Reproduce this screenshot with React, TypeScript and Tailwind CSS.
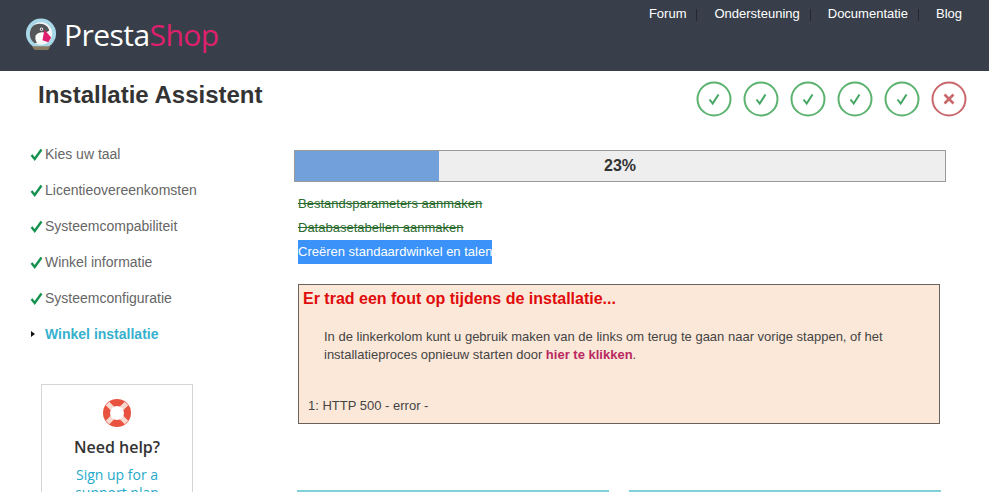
import React from "react";

const steps = ["Kies uw taal", "Licentieovereenkomsten", "Systeemcompabiliteit", "Winkel informatie", "Systeemconfiguratie"];

function Circle({ bad }: { bad?: boolean }) {
  const color = bad ? "#c9686c" : "#5cb26f";
  return (
    <svg width="36" height="36" viewBox="0 0 36 36" fill="none">
      <circle cx="18" cy="18" r="16.5" stroke={color} strokeWidth="2" />
      {bad ? (
        <path d="M13.5 13.5l9 9M22.5 13.5l-9 9" stroke={color} strokeWidth="2.6" />
      ) : (
        <path d="M13.5 18.5l3.2 4 5.8-9" stroke="#43a662" strokeWidth="2" />
      )}
    </svg>
  );
}

function Logo() {
  return (
    <svg width="33" height="33" viewBox="0 0 34 34">
      <circle cx="16.5" cy="16" r="15.5" fill="#a8d8e8" />
      <circle cx="16.5" cy="16" r="11.5" fill="#f4f6f6" />
      <path d="M5 17c0-7 4-11 10-11s9 3 10 7l-5 3-3 8-7 2c-3-2-5-5-5-9z" fill="#55565a" />
      <path d="M11 18c2-3 6-4 9-3l-2 9-5 2c-2-2-3-5-2-8z" fill="#fbfbfb" />
      <path d="M20 12l7 8-3 5-6-2z" fill="#df1f6d" />
      <circle cx="17" cy="11.5" r="1.6" fill="#fff" />
      <circle cx="17" cy="11.5" r="0.8" fill="#222" />
      <path d="M7 29h19l-2 4H10z" fill="#8b7a62" />
    </svg>
  );
}

function Lifebuoy() {
  return (
    <svg width="30" height="30" viewBox="0 0 30 30">
      <circle cx="15" cy="15" r="14" fill="#e8523f" />
      <path d="M5.5 5.5l5 5M24.5 5.5l-5 5M5.5 24.5l5-5M24.5 24.5l-5-5" stroke="#f8d9cf" strokeWidth="5" />
      <circle cx="15" cy="15" r="7" fill="#fff" />
    </svg>
  );
}

export default function App() {
  return (
    <div className="h-[492px] w-[989px] overflow-hidden bg-white font-['Liberation_Sans',sans-serif] text-[#333]">
      <header className="flex h-[71px] justify-between bg-[#393f4a]">
        <div className="flex items-start pl-[25px] pt-[18px]">
          <Logo />
          <span className="ml-[6px] font-['Open_Sans',sans-serif] text-[30px] font-medium leading-[33px] tracking-[-0.55px] text-white">
            Presta<span className="text-[#df1f6d]">Shop</span>
          </span>
        </div>
        <nav className="flex items-start pr-[27px] pt-[6px] text-[13px] leading-[16px] text-white">
          <a>Forum</a>
          <span className="ml-[10px] mr-[17px] mt-[3px] h-[12px] w-px bg-[#23272e]" />
          <a>Ondersteuning</a>
          <span className="ml-[10px] mr-[17px] mt-[3px] h-[12px] w-px bg-[#23272e]" />
          <a>Documentatie</a>
          <span className="ml-[10px] mr-[17px] mt-[3px] h-[12px] w-px bg-[#23272e]" />
          <a>Blog</a>
        </nav>
      </header>

      <div className="flex items-start justify-between pl-[38px] pr-[22px]">
        <h1 className="pt-[10px] text-[24px] font-bold leading-[28px] text-[#333]">Installatie Assistent</h1>
        <div className="flex gap-[11px] pt-[10px]">
          <Circle /><Circle /><Circle /><Circle /><Circle /><Circle bad />
        </div>
      </div>

      <div className="flex pt-[16px]">
        <aside className="w-[294px] shrink-0 pt-[3px]">
          <ul className="pl-[30px] text-[14px] leading-[36px] text-[#666]">
            {steps.map((s) => (
              <li key={s} className="flex h-[36px] items-center">
                <svg width="13" height="13" viewBox="0 0 13 13" className="mr-[2px]">
                  <path d="M1.5 7l3.2 4 6.8-9.5" fill="none" stroke="#16924f" strokeWidth="2.4" />
                </svg>
                {s}
              </li>
            ))}
            <li className="flex h-[36px] items-center font-bold text-[#36b1cd]">
              <svg width="15" height="8" viewBox="0 0 15 8">
                <path d="M1 1l4 3-4 3z" fill="#111" />
              </svg>
              Winkel installatie
            </li>
          </ul>
          <div className="ml-[41px] mt-[32px] h-[200px] w-[152px] border border-[#d5d5d5] text-center font-['Open_Sans',sans-serif]">
            <div className="flex justify-center pt-[13px]">
              <Lifebuoy />
            </div>
            <div className="mt-[8px] text-[16px] font-semibold leading-[22px] text-[#333]">Need help?</div>
            <div className="mt-[8px] text-[14px] leading-[18px] text-[#25a9c9]">
              Sign up for a
              <br />
              support plan
            </div>
          </div>
        </aside>

        <main className="w-[652px] pt-[17px]">
          <div className="relative h-[32px] border border-[#9a9a9a] bg-[#eeeeee] text-center text-[16px] font-bold leading-[30px]">
            <div className="absolute left-0 top-0 h-full w-[144px] bg-[#72a0db]" />
            <span className="relative">23%</span>
          </div>
          <ul className="ml-[4px] mt-[10px] text-[13px] leading-[24px]">
            <li className="text-[#2b6b2e] line-through">Bestandsparameters aanmaken</li>
            <li className="text-[#2b6b2e] line-through">Databasetabellen aanmaken</li>
            <li className="w-fit bg-[#3b92f8] text-white">Creëren standaardwinkel en talen</li>
          </ul>
          <div className="ml-[4px] mt-[20px] h-[140px] w-[642px] border border-[#6b625c] bg-[#fbe8d9] text-[12px] text-[#444]">
            <h3 className="pl-[4px] pt-[3px] text-[16px] font-bold leading-[22px] text-[#e00b0b]">
              Er trad een fout op tijdens de installatie...
            </h3>
            <p className="pl-[25px] pt-[18px] text-[13px] leading-[18px]">
              In de linkerkolom kunt u gebruik maken van de links om terug te gaan naar vorige stappen, of het
              <br />
              installatieproces opnieuw starten door <a className="font-bold text-[#b8285f]">hier te klikken</a>.
            </p>
            <p className="pl-[9px] pt-[33px] text-[13px] leading-[18px]">1: HTTP 500 - error -</p>
          </div>
          <div className="ml-[3px] mt-[66px] flex gap-[20px]">
            <div className="h-[20px] w-[312px] border-t-[3px] border-[#80d2d8]" />
            <div className="h-[20px] w-[312px] border-t-[3px] border-[#80d2d8]" />
          </div>
        </main>
      </div>
    </div>
  );
}
